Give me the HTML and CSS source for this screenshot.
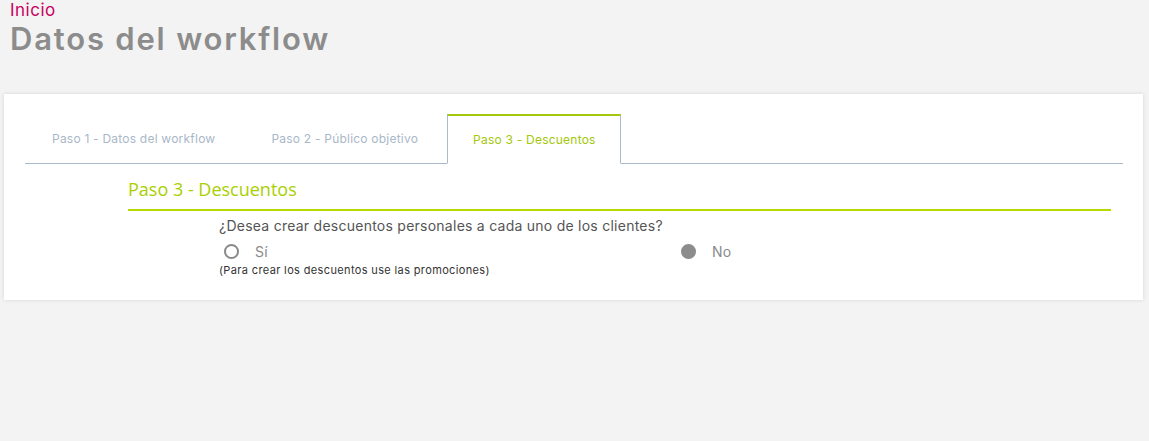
FILE: index.html
```html
<!DOCTYPE html>
<html lang="es">
<head>
<meta charset="utf-8">
<title>Datos del workflow</title>
<link rel="stylesheet" href="styles.css">
</head>
<body>
<header class="page-header">
  <a class="crumb" href="#">Inicio</a>
  <h1 class="page-title">Datos del workflow</h1>
</header>
<main class="card">
  <ul class="tabs">
    <li class="tab"><a href="#">Paso 1 - Datos del workflow</a></li>
    <li class="tab"><a href="#">Paso 2 - Público objetivo</a></li>
    <li class="tab active"><a href="#">Paso 3 - Descuentos</a></li>
  </ul>
  <section class="step">
    <h2 class="step-title">Paso 3 - Descuentos</h2>
    <div class="question">
      <p class="question-text">¿Desea crear descuentos personales a cada uno de los clientes?</p>
      <div class="options">
        <div class="option-col">
          <label class="option"><span class="radio"></span><span class="opt-label">Sí</span></label>
          <p class="note">(Para crear los descuentos use las promociones)</p>
        </div>
        <div class="option-col">
          <label class="option"><span class="radio checked"></span><span class="opt-label">No</span></label>
        </div>
      </div>
    </div>
  </section>
</main>
</body>
</html>
```

FILE: styles.css
```css
* { box-sizing: border-box; }
html, body { margin: 0; padding: 0; }
body {
  background: #f3f3f3;
  font-family: "Inter", "Lato", sans-serif;
  width: 1149px;
  height: 441px;
  overflow: hidden;
}
.page-header {
  padding: 0 0 0 10px;
  height: 94px;
}
.crumb {
  display: block;
  color: #c8005f;
  font-size: 17px;
  line-height: 20px;
  letter-spacing: 0.5px;
  text-decoration: none;
}
.page-title {
  margin: 0;
  color: #8c8c8c;
  font-size: 31px;
  font-weight: 600;
  line-height: 38px;
  letter-spacing: 1.8px;
}
.card {
  margin: 0 6px 0 4px;
  background: #fff;
  height: 206px;
  padding: 20px 20px 0 21px;
  box-shadow: 0 0 4px rgba(0,0,0,0.12);
}
.tabs {
  list-style: none;
  margin: 0;
  padding: 0;
  display: flex;
  height: 50px;
  border-bottom: 1px solid #a9bacb;
}
.tab {
  margin-bottom: -1px;
}
.tab a {
  display: block;
  height: 50px;
  margin-right: 2px;
  padding: 0 26px;
  border: 1px solid transparent;
  color: #a9b8c8;
  font-size: 12px;
  line-height: 48px;
  letter-spacing: 0.22px;
  text-decoration: none;
}
.tab.active a {
  padding: 0 24px 0 25px;
  color: #a3c80c;
  background: #fff;
  border-color: #a9bacb;
  border-top: 2px solid #a3c80c;
  border-bottom-color: #fff;
}
.step {
  margin: 0 12px 0 103px;
}
.step-title {
  margin: 0;
  padding-top: 14px;
  height: 47px;
  font-family: "Open Sans", sans-serif;
  font-weight: 400;
  font-size: 18px;
  line-height: 22px;
  color: #a8d000;
  border-bottom: 2px solid #b7d900;
}
.question {
  padding-left: 91px;
}
.question-text {
  margin: 6px 0 0;
  font-size: 14px;
  line-height: 18px;
  letter-spacing: 0.25px;
  color: #555;
}
.options {
  display: grid;
  grid-template-columns: 457px 1fr;
  padding-top: 4px;
}
.option {
  display: flex;
  align-items: center;
  height: 24px;
  padding-left: 5px;
}
.radio {
  width: 15px;
  height: 15px;
  border-radius: 50%;
  border: 2px solid #8a8a8a;
  margin-right: 16px;
}
.radio.checked {
  background: #8c8c8c;
  border-color: #8c8c8c;
}
.opt-label {
  color: #8a8a8a;
  font-size: 14px;
  letter-spacing: 0.3px;
}
.note {
  margin: 0;
  font-size: 11px;
  line-height: 14px;
  letter-spacing: 0.36px;
  color: #333;
}
```
